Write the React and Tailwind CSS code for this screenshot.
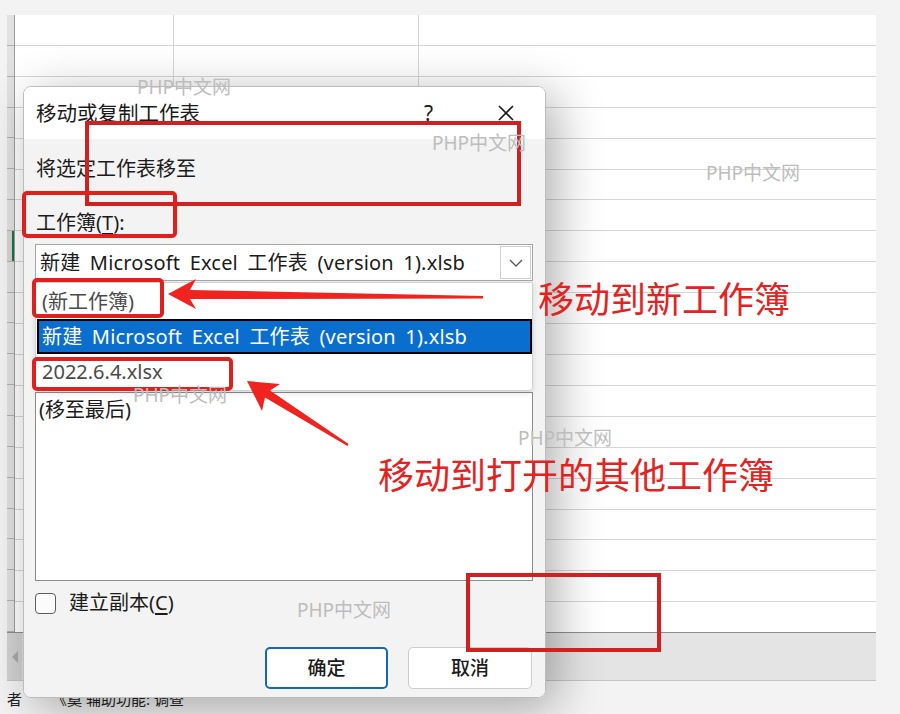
import React from "react";

const ROWS = Array.from({ length: 20 }, (_, i) => i);

// faint site watermark
const Watermark = ({ className }) => (
  <span className={`absolute whitespace-nowrap text-[19px] leading-none text-[#bdbdbd] ${className}`}>
    PHP中文网
  </span>
);

const Sheet = () => (
  <>
    {/* grid + row headers */}
    <div className="flex h-[617px] pl-[7px] pr-[24px]">
      <div className="flex w-[8px] flex-col border-r border-[#9c9c9c] bg-[#e1e1e1]">
        {ROWS.map((i) => (
          <div
            key={i}
            className={
              i === 7
                ? "flex-1 border-b border-[#b0b0b0] bg-[#d3d3d3] shadow-[inset_-2px_0_0_#1e7145]"
                : "flex-1 border-b border-[#b0b0b0]"
            }
          />
        ))}
      </div>
      <div className="flex flex-1 flex-col bg-white">
        {ROWS.map((i) => (
          <div key={i} className="flex flex-1 border-b border-[#d6d6d6] last:border-b-0">
            <div className="w-[159px] border-r border-[#d6d6d6]" />
            <div className="w-[245px] border-r border-[#d6d6d6]" />
            <div className="flex-1" />
          </div>
        ))}
      </div>
    </div>

    {/* sheet tabs / scrollbar band */}
    <div className="ml-[7px] mr-[24px] flex h-[49px] border-t border-[#8e8e8e] border-b border-b-[#c4c4c4] bg-[#e4e4e4]">
      <div className="flex w-[15px] items-center justify-center bg-[#d2d2d2]">
        <span className="h-0 w-0 border-y-[6px] border-r-[6px] border-y-transparent border-r-[#a9a9a9]" />
      </div>
    </div>

    {/* status bar */}
    <div className="flex h-[32px] items-center pl-[7px] pt-[4px] text-[15px] text-[#222]">
      <span>者</span>
      <span className="ml-[30px] flex items-center gap-[4px]">
        <span>《奠</span>
        <span>辅助功能: 调查</span>
      </span>
    </div>
  </>
);

const Dialog = () => (
  <div className="absolute left-[23px] top-[86px] flex h-[612px] w-[523px] flex-col overflow-hidden rounded-[8px] border border-[#bcbcbc] shadow-[10px_10px_48px_rgba(0,0,0,0.32)]">
    {/* title bar */}
    <div className="flex h-[52px] items-center bg-white pl-[12px] pr-[31px] text-[20.5px] leading-[24px] text-[#1a1a1a]">
      <span>移动或复制工作表</span>
      <span className="ml-auto mr-[65px] text-[21px]">?</span>
      <svg width="16" height="16" viewBox="0 0 16 16" className="text-[#1a1a1a]">
        <path d="M1 1 L15 15 M15 1 L1 15" stroke="currentColor" strokeWidth="1.6" fill="none" />
      </svg>
    </div>

    {/* body */}
    <div className="relative flex flex-1 flex-col bg-[#f3f3f3] pl-[11px] pr-[12px] text-[20px] leading-[24px] text-[#1b1b1b]">
      <div className="ml-[1px] mt-[18px]">将选定工作表移至</div>
      <div className="ml-[1px] mt-[30px]">
        工作簿(<span className="underline underline-offset-[3px]">T</span>):
      </div>

      {/* workbook combo */}
      <div className="mt-[9px] flex h-[37px] border border-[#a6a6a6] bg-white">
        <span className="flex flex-1 items-center whitespace-nowrap pl-[4px] tracking-[0.2px] [word-spacing:4px]">
          新建 Microsoft Excel 工作表 (version 1).xlsb
        </span>
        <span className="m-[1px] flex w-[31px] items-center justify-center border border-[#cfcfcf] bg-white">
          <svg width="14" height="8" viewBox="0 0 14 8">
            <path d="M1 1 L7 7 L13 1" stroke="#555" strokeWidth="1.3" fill="none" />
          </svg>
        </span>
      </div>

      <div className="ml-[1px] mt-[75px]">
        下列选定工作表之前(<span className="underline underline-offset-[3px]">B</span>):
      </div>

      {/* sheet list */}
      <div className="mt-[12px] h-[189px] border border-[#8c8c8c] bg-white pl-[3px] pt-[5px]">
        (移至最后)
      </div>

      {/* copy checkbox */}
      <div className="mt-[10px] flex items-center">
        <span className="h-[21px] w-[21px] rounded-[4px] border border-[#5c5c5c] bg-[#fbfbfb]" />
        <span className="ml-[13px]">
          建立副本(<span className="underline underline-offset-[3px]">C</span>)
        </span>
      </div>

      {/* buttons */}
      <div className="mt-[32px] flex justify-end gap-[20px] pr-[1px]">
        <button className="flex h-[42px] w-[123px] items-center justify-center rounded-[5px] border-2 border-[#1467b8] bg-white text-[19px] font-medium text-[#1b1b1b]">
          确定
        </button>
        <button className="flex h-[42px] w-[124px] items-center justify-center rounded-[5px] border border-[#cdcdcd] bg-white text-[19px] font-medium text-[#1b1b1b]">
          取消
        </button>
      </div>

      {/* open combo list */}
      <div className="absolute left-[11px] top-[143px] flex h-[109px] w-[498px] flex-col rounded-b-[4px] border border-[#d2d2d2] bg-white shadow-[0_2px_6px_rgba(0,0,0,0.12)]">
        <div className="flex h-[36px] items-center pl-[6px] pt-[2px] text-[#4a4a4a]">(新工作簿)</div>
        <div className="ml-[1px] flex h-[35px] items-center whitespace-nowrap border-2 border-black bg-[#0a6ecf] pl-[3px] tracking-[0.2px] text-white [word-spacing:4px]">
          新建 Microsoft Excel 工作表 (version 1).xlsb
        </div>
        <div className="flex flex-1 items-center pl-[6px] text-[#4a4a4a]">2022.6.4.xlsx</div>
      </div>
    </div>
  </div>
);

export default function App() {
  return (
    <div className="relative h-[714px] w-[900px] overflow-hidden bg-[#f3f3f3] pt-[15px] font-['Noto_Sans','Noto_Sans_CJK_SC',sans-serif]">
      <Sheet />
      <Dialog />

      {/* callout boxes */}
      <div className="absolute left-[85px] top-[121px] h-[85px] w-[436px] border-4 border-[#d21f1f]" />
      <div className="absolute left-[22px] top-[191px] h-[47px] w-[155px] rounded-[5px] border-4 border-[#e0201c]" />
      <div className="absolute left-[32px] top-[278px] h-[40px] w-[132px] rounded-[5px] border-4 border-[#e0201c]" />
      <div className="absolute left-[32px] top-[357px] h-[34px] w-[201px] rounded-[5px] border-4 border-[#e0201c]" />
      <div className="absolute left-[466px] top-[573px] h-[79px] w-[195px] border-4 border-[#d21f1f]" />

      {/* callout arrows */}
      <svg className="pointer-events-none absolute inset-0" width="900" height="714" viewBox="0 0 900 714">
        <polygon
          points="168,294 196,279 190,290 483,296 483,298.5 190,299 196,309"
          fill="#f0231e"
        />
        <polygon
          points="247,381 280,384 270,390.5 348.6,444 347.4,446 265,397.5 262,411"
          fill="#f0231e"
        />
      </svg>

      <span className="absolute left-[538px] top-[282px] whitespace-nowrap text-[36px] leading-none text-[#e4231e]">
        移动到新工作簿
      </span>
      <span className="absolute left-[378px] top-[458px] whitespace-nowrap text-[36px] leading-none text-[#e4231e]">
        移动到打开的其他工作簿
      </span>

      <Watermark className="left-[137px] top-[78px]" />
      <Watermark className="left-[432px] top-[134px]" />
      <Watermark className="left-[706px] top-[164px]" />
      <Watermark className="left-[133px] top-[386px]" />
      <Watermark className="left-[518px] top-[429px]" />
      <Watermark className="left-[297px] top-[601px]" />
    </div>
  );
}
